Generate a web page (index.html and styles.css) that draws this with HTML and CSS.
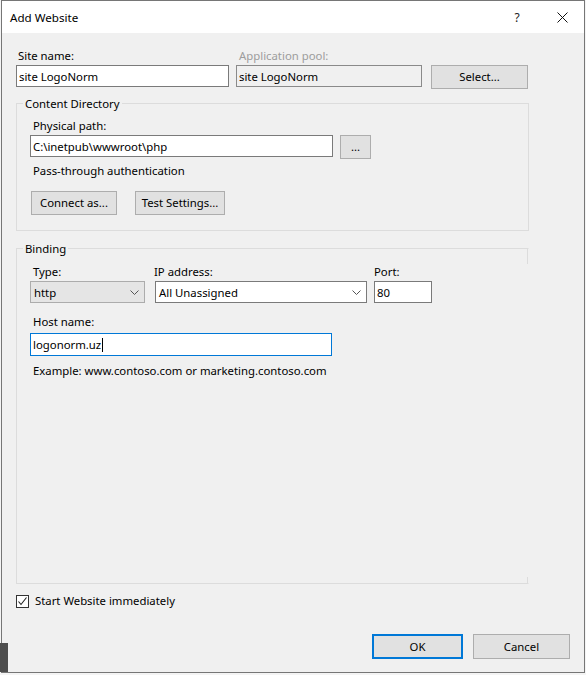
FILE: index.html
```html
<!DOCTYPE html>
<html>
<head>
<meta charset="utf-8">
<title>Add Website</title>
<link rel="stylesheet" href="styles.css">
</head>
<body>
<div class="window">
  <div class="titlebar">
    <span class="title">Add Website</span>
    <span class="tb-btn help">?</span>
    <span class="tb-btn close"><svg width="11" height="11" viewBox="0 0 11 11"><path d="M0.5 0.5L10.5 10.5M10.5 0.5L0.5 10.5" stroke="#111" stroke-width="1" fill="none"/></svg></span>
  </div>
  <div class="content">
    <div class="row row-site">
      <div class="field f-site">
        <label class="lbl">Site name:</label>
        <input class="tb" type="text" value="site LogoNorm">
      </div>
      <div class="field f-pool">
        <label class="lbl disabled">Application pool:</label>
        <input class="tb ro" type="text" value="site LogoNorm" readonly>
      </div>
      <button class="btn b-select">Select...</button>
    </div>

    <fieldset class="group g-content">
      <legend>Content Directory</legend>
      <div class="gc-body">
        <label class="lbl">Physical path:</label>
        <div class="row path-row">
          <input class="tb f-path" type="text" value="C:\inetpub\wwwroot\php">
          <button class="btn b-browse">...</button>
        </div>
        <div class="txt pass">Pass-through authentication</div>
        <div class="row btn-row">
          <button class="btn b-connect">Connect as...</button>
          <button class="btn b-test">Test Settings...</button>
        </div>
      </div>
    </fieldset>

    <fieldset class="group g-binding">
      <legend>Binding</legend>
      <div class="gb-body">
        <div class="bind-grid">
          <label class="lbl l-type">Type:</label>
          <label class="lbl l-ip">IP address:</label>
          <label class="lbl l-port">Port:</label>
          <div class="combo c-type"><span>http</span><svg width="9" height="5" viewBox="0 0 9 5"><path d="M0.5 0.5L4.5 4.5L8.5 0.5" stroke="#555" fill="none"/></svg></div>
          <div class="combo c-ip"><span>All Unassigned</span><svg width="9" height="5" viewBox="0 0 9 5"><path d="M0.5 0.5L4.5 4.5L8.5 0.5" stroke="#555" fill="none"/></svg></div>
          <input class="tb f-port" type="text" value="80">
        </div>
        <label class="lbl l-host">Host name:</label>
        <div class="tb f-host focus">logonorm.uz<span class="caret"></span></div>
        <div class="txt example">Example: www.contoso.com or marketing.contoso.com</div>
      </div>
    </fieldset>

    <div class="check-row">
      <span class="checkbox"><svg width="11" height="11" viewBox="0 0 11 11"><path d="M1.5 5.5L4 8.5L9.5 1.5" stroke="#222" stroke-width="1.1" fill="none"/></svg></span>
      <span class="check-label">Start Website immediately</span>
    </div>

    <div class="row dlg-buttons">
      <button class="btn b-ok">OK</button>
      <button class="btn b-cancel">Cancel</button>
    </div>
  </div>
</div>
<div class="desk-strip"></div>
</body>
</html>
```

FILE: styles.css
```css
* { box-sizing: border-box; }
html, body { margin: 0; padding: 0; }
body {
  width: 586px;
  height: 675px;
  overflow: hidden;
  position: relative;
  background: #f4f4f4;
  font-family: "Noto Sans", "Segoe UI", sans-serif;
  font-size: 11.35px;
  color: #000;
}
.window {
  margin-left: 1px;
  width: 584px;
  height: 673px;
  border: 1px solid #767676;
  background: #f0f0f0;
  display: flex;
  flex-direction: column;
}
.titlebar {
  flex: none;
  height: 32px;
  background: #fff;
  display: flex;
  align-items: center;
  padding-left: 8px;
}
.title { flex: 1; font-size: 11.6px; }
.tb-btn {
  height: 32px;
  display: flex;
  align-items: center;
  justify-content: center;
}
.help { width: 46px; font-size: 12px; color: #222; }
.close { width: 44px; }

.content {
  flex: 1;
  display: flex;
  flex-direction: column;
  padding: 15px 14px 13px 14px;
  min-height: 0;
}
.row { display: flex; align-items: flex-start; }
.field { display: flex; flex-direction: column; }
.lbl {
  display: block;
  height: 15px;
  line-height: 15px;
  margin-left: 2px;
  white-space: nowrap;
}
.lbl.disabled { color: #9d9d9d; margin-left: 3px; }
.tb {
  height: 22px;
  margin: 2px 0 0 0;
  border: 1px solid #7a7a7a;
  background: #fff;
  padding: 0 2px;
  font: inherit;
  color: #000;
  line-height: 20px;
  outline: none;
  border-radius: 0;
  white-space: nowrap;
}
.tb.ro { background: #f0f0f0; border-color: #8a8a8a; }
.btn {
  height: 24px;
  margin: 0;
  padding: 0;
  border: 1px solid #adadad;
  background: #e1e1e1;
  font: inherit;
  color: #000;
  line-height: 22px;
  text-align: center;
  border-radius: 0;
}
.f-site { width: 213px; }
.f-pool { width: 186px; margin-left: 7px; }
.b-select { width: 97px; margin-left: 9px; margin-top: 17px; }

.group {
  margin: 0 41px 0 0;
  padding: 0;
  border: 1px solid #dcdcdc;
  min-width: 0;
}
.group legend {
  margin-left: 6px;
  padding: 0 2px;
  line-height: 15px;
  height: 15px;
}
.g-content { margin-top: 7px; flex: none; }
.gc-body { padding: 7px 0 15px 13px; }
.gc-body .lbl { margin-left: 3px; }
.path-row { margin-top: 2px; }
.path-row .tb { margin-top: 0; }
.f-path { width: 303px; }
.b-browse { width: 31px; margin-left: 7px; line-height: 20px; }
.txt { height: 15px; line-height: 15px; margin-left: 3px; white-space: nowrap; }
.pass { margin-top: 4px; }
.btn-row { margin-top: 13px; }
.b-connect { width: 86px; margin-left: 1px; }
.b-test { width: 90px; margin-left: 18px; }

.g-binding {
  margin-top: 10px;
  flex: 1;
  min-height: 0;
  border-right-color: transparent;
  background:
    linear-gradient(#dcdcdc, #dcdcdc) right top / 1px 15px no-repeat,
    linear-gradient(#dcdcdc, #dcdcdc) right bottom / 1px 6px no-repeat;
}
.gb-body { padding: 8px 0 0 13px; }
.bind-grid {
  display: grid;
  grid-template-columns: 115px 212px 58px;
  column-gap: 10px;
  row-gap: 2px;
}
.bind-grid > :nth-child(3n) { margin-left: -3px; }
.bind-grid > :nth-child(6) { margin-left: -3px; }
.l-type { margin-left: 3px; }
.l-ip { margin-left: -1px; }
.l-port { margin-left: -3px; }
.f-port { margin-top: 0; width: 58px; }
.combo {
  height: 22px;
  display: flex;
  align-items: center;
  justify-content: space-between;
  padding: 0 5px 0 3px;
  border: 1px solid #7a7a7a;
  background: #fff;
}
.combo svg { flex: none; margin-top: 1px; }
.c-type { background: #e5e5e5; border-color: #acacac; }
.l-host { margin-left: 3px; margin-top: 11px; }
.f-host {
  width: 302px;
  height: 23px;
  margin-top: 4px;
  display: flex;
  align-items: center;
}
.tb.focus { border-color: #0078d7; }
.caret {
  display: inline-block;
  width: 1px;
  height: 14px;
  background: #000;
  margin-left: 1px;
}
.example { margin-top: 7px; }

.check-row {
  flex: none;
  margin-top: 10px;
  height: 14px;
  display: flex;
  align-items: center;
}
.checkbox {
  width: 13px;
  height: 13px;
  border: 1px solid #333;
  background: #fff;
  display: flex;
  align-items: center;
  justify-content: center;
}
.check-label { margin-left: 6px; line-height: 14px; }

.dlg-buttons { flex: none; margin-top: 26px; justify-content: flex-end; }
.b-ok { width: 91px; height: 25px; border: 2px solid #0078d7; line-height: 21px; }
.b-cancel { width: 97px; height: 25px; margin-left: 10px; }

.desk-strip {
  position: absolute;
  left: 0;
  top: 643px;
  width: 8px;
  height: 29px;
  background: #4d4d4d;
}
```
